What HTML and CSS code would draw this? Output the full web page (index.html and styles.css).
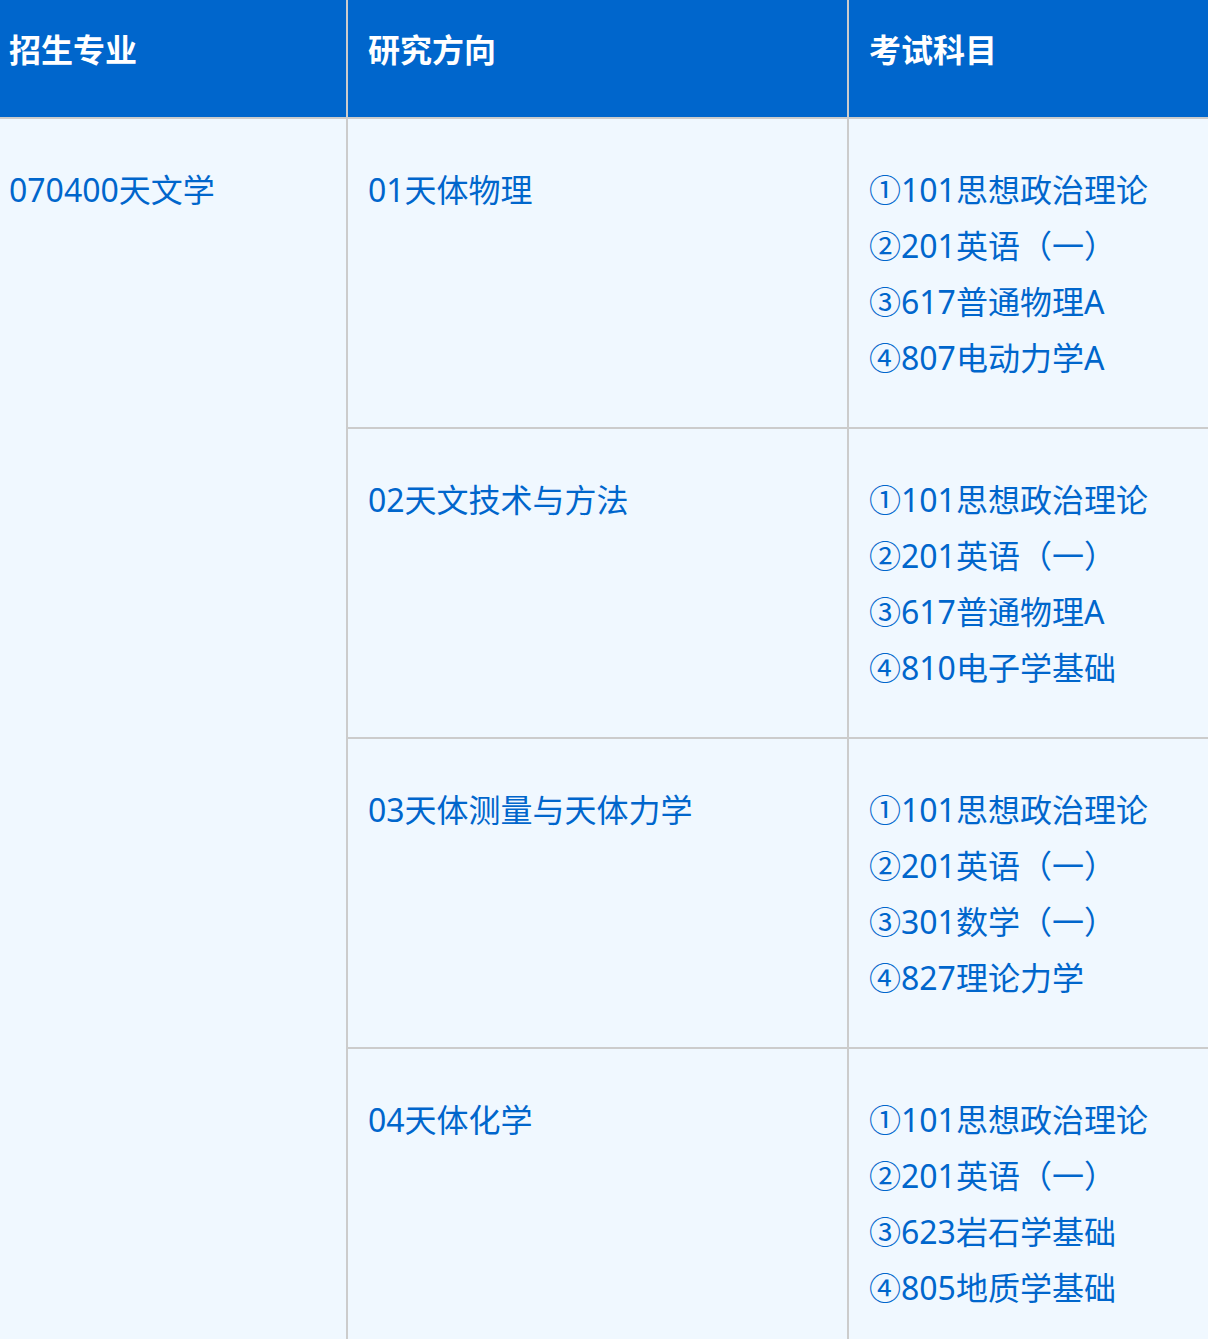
FILE: index.html
```html
<!DOCTYPE html>
<html lang="zh-CN">
<head>
<meta charset="utf-8">
<title>招生专业</title>
<link rel="stylesheet" href="styles.css">
</head>
<body>
<table class="plan">
  <colgroup>
    <col class="c1">
    <col class="c2">
    <col class="c3">
  </colgroup>
  <thead>
    <tr>
      <th class="major">招生专业</th>
      <th class="dir">研究方向</th>
      <th class="exam">考试科目</th>
    </tr>
  </thead>
  <tbody>
    <tr>
      <td class="major" rowspan="4">070400天文学</td>
      <td class="dir">01天体物理</td>
      <td class="exam">①101思想政治理论<br>②201英语（一）<br>③617普通物理A<br>④807电动力学A</td>
    </tr>
    <tr>
      <td class="dir">02天文技术与方法</td>
      <td class="exam">①101思想政治理论<br>②201英语（一）<br>③617普通物理A<br>④810电子学基础</td>
    </tr>
    <tr>
      <td class="dir">03天体测量与天体力学</td>
      <td class="exam">①101思想政治理论<br>②201英语（一）<br>③301数学（一）<br>④827理论力学</td>
    </tr>
    <tr>
      <td class="dir">04天体化学</td>
      <td class="exam">①101思想政治理论<br>②201英语（一）<br>③623岩石学基础<br>④805地质学基础</td>
    </tr>
  </tbody>
</table>
</body>
</html>
```
FILE: styles.css
```css
html, body {
  margin: 0;
  padding: 0;
  background: #f0f8ff;
}
.plan {
  border-collapse: separate;
  border-spacing: 0;
  table-layout: fixed;
  width: 1208px;
  font-family: "Noto Sans", "Noto Sans CJK SC", sans-serif;
  font-size: 32px;
  line-height: 56px;
  color: #0066cc;
}
.c1 { width: 348px; }
.c2 { width: 501px; }
.c3 { width: 359px; }
.plan th {
  background: #0066cc;
  color: #ffffff;
  font-weight: 700;
  text-align: left;
  vertical-align: top;
  padding-top: 22px;
  padding-bottom: 39px;
  border-bottom: 2px solid #cccccc;
}
.plan td {
  background: #f0f8ff;
  vertical-align: top;
  padding-top: 43px;
  padding-bottom: 41px;
  border-bottom: 2px solid #cccccc;
}
.plan th.major, .plan td.major {
  padding-left: 9px;
  padding-right: 0;
  border-right: 2px solid #cccccc;
}
.plan th.dir, .plan td.dir {
  padding-left: 20px;
  padding-right: 0;
  border-right: 2px solid #cccccc;
}
.plan th.exam, .plan td.exam {
  padding-left: 20px;
  padding-right: 0;
}
```
